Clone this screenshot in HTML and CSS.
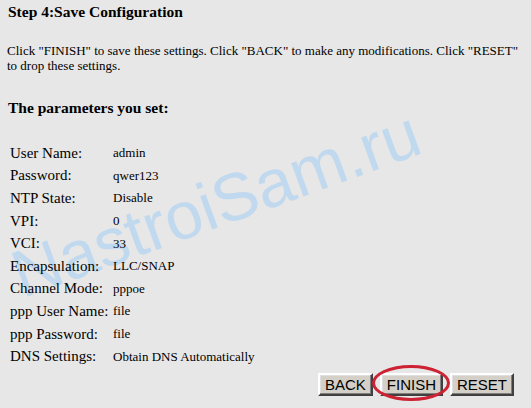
FILE: index.html
```html
<!DOCTYPE html>
<html lang="en">
<head>
  <meta charset="UTF-8">
  <title>Step 4: Save Configuration</title>
  <link rel="stylesheet" href="styles.css">
</head>
<body>
  <div class="page">
    <div class="watermark">NastroiSam.ru</div>

    <h2 class="step-title">Step 4:Save Configuration</h2>
    <p class="intro">Click "FINISH" to save these settings. Click "BACK" to make any modifications. Click "RESET" to drop these settings.</p>

    <h3 class="params-title">The parameters you set:</h3>

    <table class="params">
      <tr><td class="label">User Name:</td><td class="value">admin</td></tr>
      <tr><td class="label">Password:</td><td class="value">qwer123</td></tr>
      <tr><td class="label">NTP State:</td><td class="value">Disable</td></tr>
      <tr><td class="label">VPI:</td><td class="value">0</td></tr>
      <tr><td class="label">VCI:</td><td class="value">33</td></tr>
      <tr><td class="label">Encapsulation:</td><td class="value">LLC/SNAP</td></tr>
      <tr><td class="label">Channel Mode:</td><td class="value">pppoe</td></tr>
      <tr><td class="label">ppp User Name:</td><td class="value">file</td></tr>
      <tr><td class="label">ppp Password:</td><td class="value">file</td></tr>
      <tr><td class="label">DNS Settings:</td><td class="value">Obtain DNS Automatically</td></tr>
    </table>

    <div class="actions">
      <button class="btn">BACK</button>
      <span class="finish-wrap"><button class="btn">FINISH</button></span>
      <button class="btn">RESET</button>
    </div>
  </div>
</body>
</html>
```

FILE: styles.css
```css
* {
  box-sizing: border-box;
}

body {
  margin: 0;
  background: #e7e7e7;
  color: #000;
  font-family: "Liberation Serif", "Times New Roman", serif;
  overflow: hidden;
}

.page {
  position: relative;
  padding: 0 8px;
  height: 408px;
}

.watermark {
  position: absolute;
  left: 26px;
  top: 238px;
  font-family: "Liberation Sans", Arial, sans-serif;
  font-size: 67px;
  line-height: 1;
  color: #c1d9ee;
  transform: rotate(-20deg);
  transform-origin: 0 100%;
  white-space: nowrap;
  pointer-events: none;
}

.step-title {
  position: relative;
  margin: 3px 0 0;
  font-size: 15.5px;
  line-height: 18px;
}

.intro {
  position: relative;
  margin: 22px 0 0 -1px;
  font-size: 13px;
  line-height: 15px;
}

.params-title {
  position: relative;
  margin: 26px 0 0;
  font-size: 15.5px;
  line-height: 18px;
}

.params {
  position: relative;
  margin-top: 25px;
  border-collapse: collapse;
}

.params td {
  height: 22.6px;
  padding: 0;
  vertical-align: middle;
}

.label {
  width: 105px;
  padding-left: 2px !important;
  font-size: 15px;
}

.value {
  font-size: 13px;
}

.actions {
  display: flex;
  justify-content: flex-end;
  gap: 7px;
  margin-top: 5px;
  padding-right: 9px;
}

.btn {
  font-family: "Liberation Sans", Arial, sans-serif;
  font-size: 15px;
  height: 23px;
  padding: 0 5px;
  background: #d4d0c8;
  color: #000;
  border: 2px solid;
  border-color: #fff #404040 #404040 #fff;
  box-shadow: inset -1px -1px 0 #808080, inset 1px 1px 0 #dfdfdf;
}

.finish-wrap {
  position: relative;
  display: flex;
}

.finish-wrap::after {
  content: "";
  position: absolute;
  left: -8px;
  right: -7px;
  top: -8px;
  bottom: -5px;
  border: 3px solid #cc2233;
  border-radius: 50%;
  pointer-events: none;
}
```
